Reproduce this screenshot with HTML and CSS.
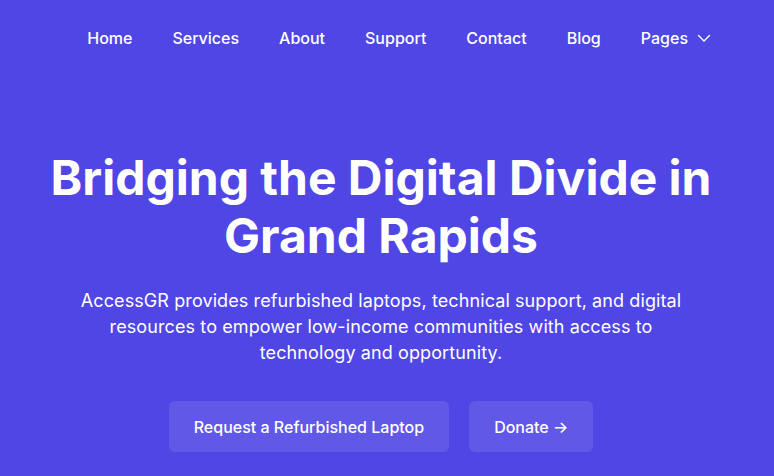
FILE: index.html
```html
<!DOCTYPE html>
<html lang="en">
<head>
<meta charset="utf-8">
<title>AccessGR</title>
<link rel="stylesheet" href="styles.css">
</head>
<body>
<div class="page">
  <header class="nav">
    <a class="nav-link" href="#">Home</a>
    <a class="nav-link" href="#">Services</a>
    <a class="nav-link" href="#">About</a>
    <a class="nav-link" href="#">Support</a>
    <a class="nav-link" href="#">Contact</a>
    <a class="nav-link" href="#">Blog</a>
    <a class="nav-link nav-drop" href="#">Pages
      <svg class="chev" width="14" height="14" viewBox="0 0 14 14" fill="none" stroke="currentColor" stroke-width="1.4" stroke-linecap="round" stroke-linejoin="round"><path d="M1.5 4.5 7 10l5.5-5.5"/></svg>
    </a>
  </header>
  <section class="hero">
    <h1 class="title">Bridging the Digital Divide in Grand Rapids</h1>
    <p class="lead">AccessGR provides refurbished laptops, technical support, and digital resources to empower low-income communities with access to technology and opportunity.</p>
    <div class="actions">
      <a class="btn" href="#">Request a Refurbished Laptop</a>
      <a class="btn" href="#">Donate <span class="arrow">→</span></a>
    </div>
  </section>
</div>
</body>
</html>
```
FILE: styles.css
```css
* { box-sizing: border-box; }
html, body { margin: 0; padding: 0; }
body {
  background: #4f46e5;
  color: #ffffff;
  font-family: Inter, "Noto Sans", sans-serif;
  height: 476px;
  overflow: hidden;
}
.page { padding: 0; }
.nav {
  display: flex;
  justify-content: flex-end;
  align-items: center;
  gap: 40px;
  height: 76px;
  padding-right: 63px;
}
.nav-link {
  color: #ffffff;
  text-decoration: none;
  font-size: 16px;
  font-weight: 500;
  line-height: 24px;
}
.nav-drop {
  display: flex;
  align-items: center;
  gap: 9px;
}
.chev { display: block; }
.hero {
  display: flex;
  flex-direction: column;
  align-items: center;
  text-align: center;
  padding: 73px 40px 0 28px;
}
.title {
  margin: 0;
  font-size: 48px;
  font-weight: 700;
  line-height: 58px;
  letter-spacing: 0;
  max-width: 720px;
}
.lead {
  margin: 23px 0 0;
  font-size: 18px;
  line-height: 26px;
  font-weight: 400;
  letter-spacing: 0.1px;
  max-width: 615px;
}
.actions {
  display: flex;
  gap: 20px;
  margin-top: 35px;
}
.btn {
  display: block;
  background: #6158e8;
  color: #ffffff;
  text-decoration: none;
  font-size: 16px;
  font-weight: 500;
  line-height: 24px;
  padding: 14px 25px 13px;
  border-radius: 6px;
}
```
